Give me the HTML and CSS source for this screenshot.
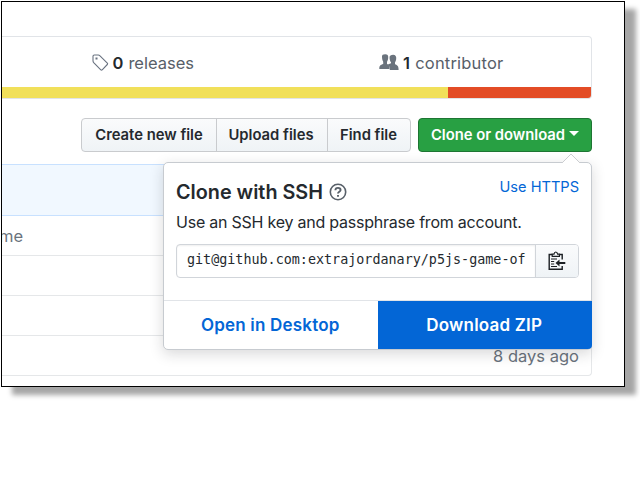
FILE: index.html
```html
<!DOCTYPE html>
<html lang="en">
<head>
<meta charset="utf-8">
<title>Repository</title>
<link rel="stylesheet" href="styles.css">
</head>
<body>
<main class="window">
  <section class="summary">
    <div class="stats">
      <div class="stat releases">
        <svg width="17" height="18" viewBox="0 0 17 18" fill="none" stroke="#697280" stroke-width="1.1"><path d="M1 2.3Q1 1 2.3 1H6.2Q7.2 1 8 1.8L15.3 9.1Q16 9.8 15.3 10.5L10.2 15.8Q9.5 16.4 8.8 15.8L1.7 8.6Q1 7.8 1 6.8Z"/><path d="M3.5 3.5h2v2h-2z" fill="#697280" stroke="none"/></svg>
        <b>0</b><span>releases</span>
      </div>
      <div class="stat contributors">
        <svg width="20" height="17" viewBox="0 0 20 17" fill="#6a737d"><path d="M10.6 2.5Q11.3.8 14 .8C16.6.8 17.5 2.5 17.2 5C17 7 16.2 7.8 16 8.5V10.3C18.5 11.3 19.6 11.8 19.6 16H10.8C10.8 13 10 11.5 8.8 10.5L12 9.3V8.2C10.9 7 10.4 4.8 10.6 2.5Z"/><path d="M3 3C2.8.9 4 .2 6.2.2S9.5 1 9.2 4C9.1 6 8.4 7 8 7.8V10C10 10.8 10.7 11.6 10.5 15H.3C.3 11.5 1.5 10.9 4.2 10V7.8C3.5 6.6 3.1 5.2 3 3Z"/></svg>
        <b>1</b><span>contributor</span>
      </div>
    </div>
    <div class="languages"><i class="js"></i><i class="html"></i></div>
  </section>
  <nav class="actions">
    <div class="group">
      <button class="btn create"><span>Create new file</span></button>
      <button class="btn upload"><span>Upload files</span></button>
      <button class="btn find"><span>Find file</span></button>
    </div>
    <div class="clone">
      <button class="btn primary"><span>Clone or download</span><i class="caret"></i></button>
      <div class="popover">
        <svg class="tip" width="20" height="10" viewBox="0 0 20 10"><path d="M1 10L10 1L19 10" fill="#fff" stroke="#ccced1"/></svg>
        <div class="body">
          <div class="heading">
            <h1>Clone with SSH</h1>
            <svg class="help" width="18" height="18" viewBox="0 0 18 18" fill="none" stroke="#586069" stroke-width="1.6"><circle cx="9" cy="9" r="7.7"/><path d="M6.4 7.2C6.4 4.1 11.6 4.1 11.6 7C11.6 8.8 9 8.8 9 10.5M9 12v1.8" stroke-width="1.9"/></svg>
            <a class="https">Use HTTPS</a>
          </div>
          <p>Use an SSH key and passphrase from account.</p>
          <div class="field">
            <div class="url">git@github.com:extrajordanary/p5js-game-of</div>
            <button class="copy"><svg width="18" height="20" viewBox="0 0 18 20" fill="none" stroke="#1b1f23" stroke-width="1.4"><path d="M4 3.5H1.2V18.2H14.2V15M11.5 3.5H14.2V8.5"/><path d="M4.2 5.3V3.2H6Q6.3 1 7.8 1T9.6 3.2H11.4V5.3Z" stroke-width="1.2"/><path d="M3 8h6M3 10.5h3.2M3 13h3.2M3 15.5h6" stroke-width="1.1"/><path d="M17.3 12H10" stroke-width="2"/><path d="M7.5 12L11.5 8.6V15.4Z" fill="#1b1f23" stroke="none"/></svg></button>
          </div>
        </div>
        <div class="footer"><a class="desktop"><span>Open in Desktop</span></a><a class="zip"><span>Download ZIP</span></a></div>
      </div>
    </div>
  </nav>
  <section class="files">
    <div class="commit"></div>
    <div class="row"><span class="name">me</span></div>
    <div class="row"></div>
    <div class="row"></div>
    <div class="row last"><span class="age">8 days ago</span></div>
  </section>
</main>
</body>
</html>
```
FILE: styles.css
```css
* { box-sizing: border-box; }
body { margin: 0; padding: 1px; min-height: 480px; background: #fff; color: #24292e; font: 16px/20px Inter, "Liberation Sans", sans-serif; }
.window { width: 624px; height: 386px; border: 1px solid #000; background: #fff; box-shadow: 11px 8px 5px #a6a6a6; }
.summary { width: 590px; height: 63px; margin-top: 34px; border: 1px solid #e1e4e8; border-left: 0; border-radius: 0 4px 4px 0; overflow: hidden; }
.stats { display: flex; height: 50px; padding-top: 2px; align-items: center; color: #586069; }
.stat { display: flex; align-items: center; white-space: nowrap; font-size: 16.5px; }
.stat svg { margin-top: -1px; }
.stat b { color: #24292e; font-weight: 600; }
.releases { padding-left: 90px; width: 377px; }
.releases b { margin: 0 5px 0 3.5px; }
.contributors { letter-spacing: .2px; }
.contributors b { margin: 0 5px 0 4px; }
.languages { display: flex; height: 11px; }
.js { width: 446px; background: #f1e05a; }
.html { flex: 1; background: #e34c26; }
.actions { display: flex; height: 35px; margin: 19px 0 0 79px; gap: 7px; }
.group { display: flex; width: 330px; }
button { margin: 0; padding: 0; font: inherit; color: inherit; }
.btn { display: flex; align-items: center; justify-content: center; height: 34px; border: 1px solid #c9cbce; background: linear-gradient(#fafbfc, #eff3f6); font-size: 14.8px; font-weight: 600; white-space: nowrap; }
.btn span { margin-top: -1px; }
.create { width: 136px; border-radius: 4px 0 0 4px; }
.upload { width: 112px; margin-left: -1px; padding-right: 2px; }
.find { width: 84px; margin-left: -1px; padding-right: 1px; border-radius: 0 4px 4px 0; }
.clone { position: relative; width: 174px; }
.primary { width: 174px; border-color: #1e7533; border-radius: 4px; background: #28a043; color: #fff; gap: 4px; }
.caret { border: 5px solid transparent; border-top-color: #fff; border-bottom: 0; margin-top: -3px; }
.popover { position: absolute; z-index: 2; top: 44px; right: 0; width: 429px; height: 188px; border: 1px solid #c7cbd0; border-radius: 5px; background: #fff; box-shadow: 0 4px 14px rgba(27,31,35,.17); }
.tip { position: absolute; top: -10px; right: 10px; }
.body { height: 137px; padding: 15px 12px 0; }
.heading { display: flex; height: 28px; }
h1 { margin: 0; font-size: 19.8px; line-height: 28px; font-weight: 600; white-space: nowrap; }
.help { margin: 5px 0 0 6px; }
.https { margin-left: auto; color: #0366d6; font-size: 14.6px; line-height: 19px; }
p { margin: 6px 0 0; height: 20px; letter-spacing: -.23px; white-space: nowrap; }
.field { display: flex; margin-top: 12px; height: 34px; border: 1px solid #d1d5da; border-radius: 4px; overflow: hidden; }
.url { width: 358px; padding-left: 10px; line-height: 30px; font-family: "DejaVu Sans Mono", monospace; font-size: 13.4px; white-space: nowrap; box-shadow: inset 0 1px 2px rgba(27,31,35,.07); }
.copy { flex: 1; border: 0; border-left: 1px solid #d1d5da; background: linear-gradient(#fafbfc, #eff3f6); display: flex; align-items: center; justify-content: center; }
.footer { display: flex; height: 49px; border-top: 1px solid #e1e4e8; font-size: 17px; letter-spacing: .2px; font-weight: 600; color: #0366d6; }
.footer a { display: flex; align-items: center; justify-content: center; white-space: nowrap; }
.desktop { width: 213.5px; padding-right: 1px; }
.zip { flex: 1; margin: 0 -1px 0 0; padding-right: 1px; background: #0366d6; color: #fff; border-radius: 0 0 4px 0; }
.files { width: 590px; margin-top: 11px; color: #6a737d; }
.commit { height: 52px; background: #f1f8ff; border: 1px solid #c8e1ff; border-left: 0; border-radius: 0 4px 0 0; }
.row { display: flex; height: 40px; align-items: center; border: 1px solid #e5e7e9; border-width: 0 1px 1px 0; font-size: 16.5px; overflow: hidden; }
.name { margin-left: -3px; }
.last { border-radius: 0 0 4px; }
.age { margin-left: auto; padding-right: 12px; }
```
